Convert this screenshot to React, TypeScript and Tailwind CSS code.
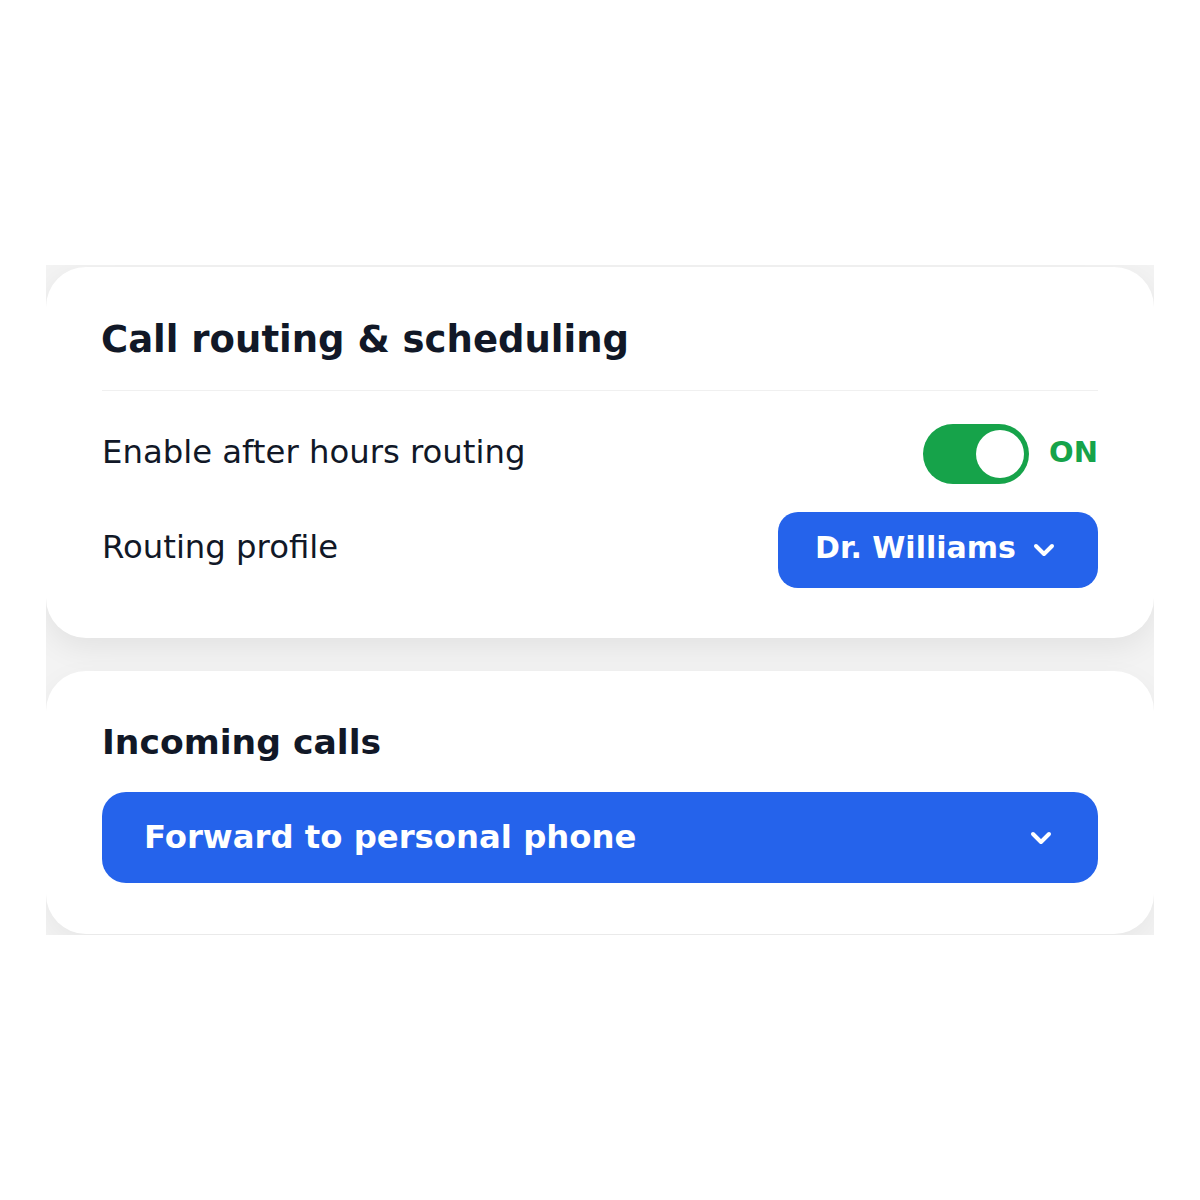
import React from "react";
import { ChevronDown } from "lucide-react";

export default function App() {
  const font = { fontFamily: '"DejaVu Sans", "Liberation Sans", sans-serif' };
  return (
    <div className="w-[1200px] h-[1200px] bg-white" style={font}>
      <div className="pt-[265px] px-[46px]">
        <div className="h-[670px] overflow-hidden bg-[#f3f3f3] pt-[2px] flex flex-col gap-[33px]">
          <div className="bg-white rounded-[40px] shadow-[0_10px_30px_rgba(0,0,0,0.07)] px-[56px] pt-[51px] pb-[50px]">
            <div className="border-b border-[#f0f0f0] pb-[28px]">
              <h2 className="text-[37px] leading-[44px] font-bold text-[#111827] -ml-[1px]">
                Call routing &amp; scheduling
              </h2>
            </div>
            <div className="mt-[33px] flex flex-col gap-[28px]">
              <div className="flex items-center justify-between h-[60px]">
                <span className="text-[32.3px] leading-[38px] text-[#111827] mb-[4px]">
                  Enable after hours routing
                </span>
                <div className="flex items-center gap-[20px]">
                  <div className="w-[106px] h-[60px] rounded-full bg-[#16a34a] flex items-center justify-end pr-[5px]">
                    <div className="w-[48px] h-[48px] rounded-full bg-white" />
                  </div>
                  <span className="text-[29px] leading-[34px] font-bold text-[#16a34a] mb-[4px]">
                    ON
                  </span>
                </div>
              </div>
              <div className="flex items-center justify-between">
                <span className="text-[32.3px] leading-[38px] text-[#111827] mb-[6px]">
                  Routing profile
                </span>
                <button className="h-[76px] w-[320px] rounded-[20px] bg-[#2563eb] text-white flex items-center pl-[37px] gap-[12px]">
                  <span className="text-[30px] leading-[34px] font-bold mb-[4px]">Dr. Williams</span>
                  <ChevronDown size={32} strokeWidth={3} />
                </button>
              </div>
            </div>
          </div>
          <div className="bg-white rounded-[40px] shadow-[0_10px_30px_rgba(0,0,0,0.05)] px-[56px] pt-[51px] pb-[51px]">
            <h2 className="text-[34.6px] leading-[40px] font-bold text-[#111827]">Incoming calls</h2>
            <button className="mt-[30px] w-full h-[91px] rounded-[24px] bg-[#2563eb] text-white flex items-center justify-between pl-[42px] pr-[41px]">
              <span className="text-[32.3px] leading-[38px] font-bold mb-[2px]">Forward to personal phone</span>
              <ChevronDown size={32} strokeWidth={3} />
            </button>
          </div>
        </div>
      </div>
    </div>
  );
}
